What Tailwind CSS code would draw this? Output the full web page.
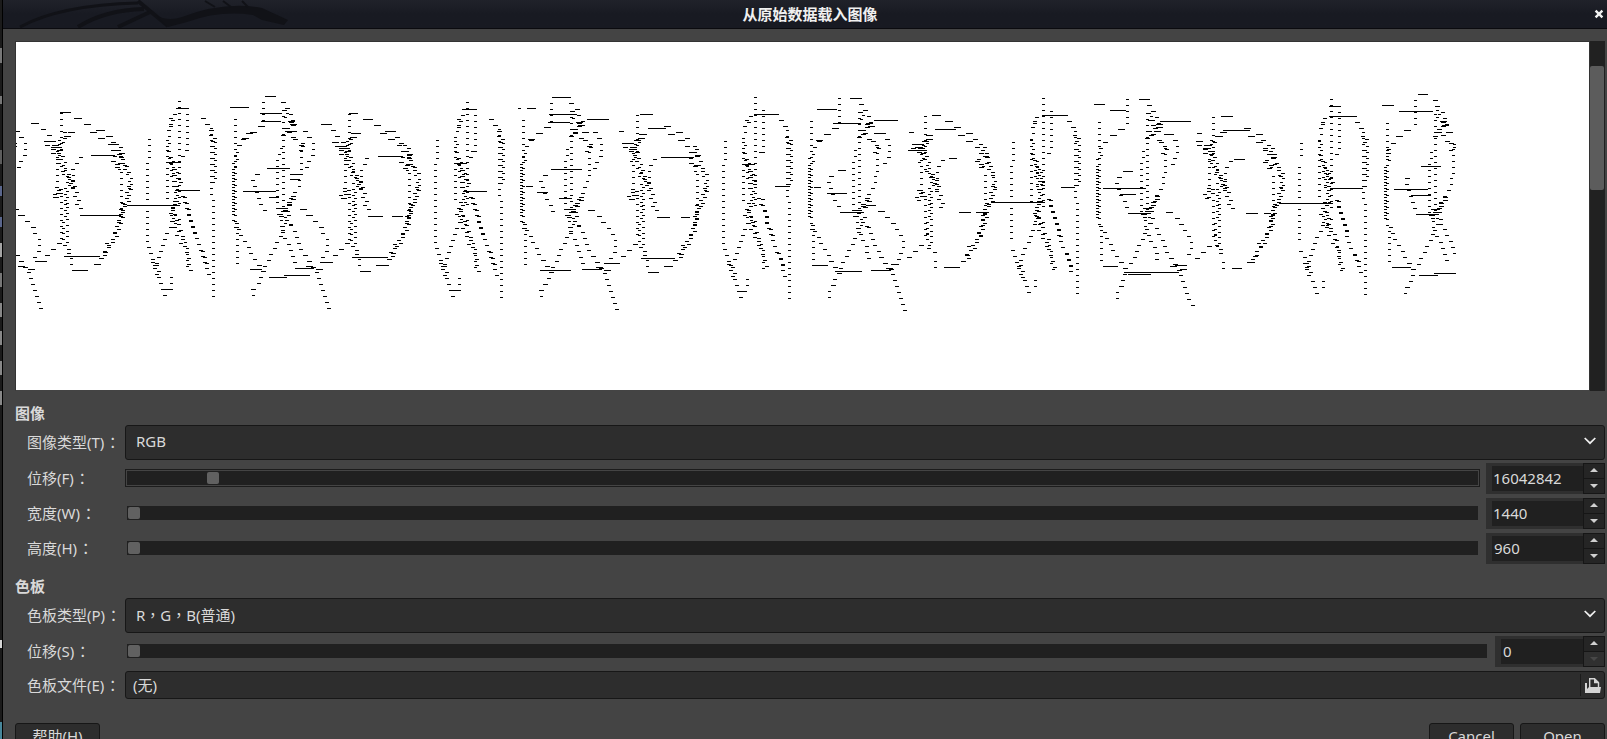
<!DOCTYPE html>
<html lang="zh-CN">
<head>
<meta charset="utf-8">
<title>从原始数据载入图像</title>
<script src="https://cdn.jsdelivr.net/npm/@tailwindcss/browser@4"></script>
</head>
<body class="w-[1607px] h-[739px] overflow-hidden bg-[#444444] text-[#d9d9d9] text-[15px] leading-[20px] font-['Noto_Sans','Noto_Sans_CJK_SC',sans-serif]">
<div class="flex w-full h-full">
  <!-- sliver of the desktop behind the window -->
  <div class="w-[3px] shrink-0 bg-[#1b1b1b] border-r border-black flex flex-col">
    <i class="h-[48px]"></i><i class="h-[15px] bg-[#777]"></i><i class="h-[33px]"></i><i class="h-[8px] bg-[#777]"></i>
    <i class="h-[46px]"></i><i class="h-[14px] bg-[#5c5c5c]"></i><i class="h-[22px]"></i><i class="h-[10px] bg-[#5a668c]"></i>
    <i class="h-[21px]"></i><i class="h-[10px] bg-[#5a668c]"></i><i class="h-[16px]"></i><i class="h-[14px] bg-[#a5a5a5]"></i>
    <i class="h-[16px]"></i><i class="h-[14px] bg-[#777]"></i><i class="h-[16px]"></i><i class="h-[14px] bg-[#888]"></i>
    <i class="h-[14px]"></i><i class="h-[14px] bg-[#888]"></i><i class="h-[16px]"></i><i class="h-[14px] bg-[#888]"></i>
    <i class="h-[16px]"></i><i class="h-[14px] bg-[#888]"></i><i class="h-[235px]"></i>
    <i class="h-[8px] bg-[#d5d5d5]"></i><i class="h-[74px]"></i><i class="grow bg-[#47879b]"></i>
  </div>
  <div class="flex flex-col grow min-w-0">
    <header class="relative h-[29px] shrink-0 bg-linear-to-b from-[#20222a] via-[#181a22] to-[#181a22] border-b border-[#0b0b0f] flex items-center">
      <svg class="absolute left-0 top-0" width="300" height="28" viewBox="3 0 300 28" fill="none" stroke="#111217">
        <path d="M20 27Q60 5 138 3" stroke-width="3"/><path d="M78 27Q105 10 144 9" stroke-width="4"/><path d="M118 27L150 12" stroke-width="4"/>
        <path d="M138 1L168 26" stroke-width="4"/><path d="M155 15Q168 22 182 17Q225 1 262 8L288 20L284 25L262 20L253 15Q220 10 187 22L168 27Z" fill="#111217" stroke="none"/>
        <path d="M215 7L205 1M231 7L223 1M248 7L242 1" stroke-width="2"/>
      </svg>
      <h1 class="relative w-full text-center font-bold text-[15px] text-[#f0f0f0] pl-[10px]">从原始数据载入图像</h1>
      <svg class="absolute right-[3px] top-[9px]" width="10" height="10" viewBox="0 0 10 10"><path d="M1.6 1.6L8.4 8.4M8.4 1.6L1.6 8.4" stroke="#f2f2f2" stroke-width="2.4"/></svg>
    </header>
    <main class="pl-[12px] pr-[2px] pt-[12px] flex flex-col">
      <div class="flex h-[350px] w-[1590px]">
        <div class="w-[1575px] h-full border border-[#333] border-b-[#444] bg-white">
          <svg width="1573" height="348" viewBox="16 42 1573 348" shape-rendering="crispEdges" class="block"><path id="raw" fill="#000"/></svg>
        </div>
        <div class="w-[15px] bg-[#212121] pt-[25px] flex"><div class="w-[14px] h-[124px] rounded-[2px] bg-[#5c5c5c]"></div></div>
      </div>
      <h2 class="font-bold h-[20px] mt-[12px]">图像</h2>
      <div class="flex items-center h-[35px] mt-[2px]">
        <label class="w-[110px] pl-[12px] shrink-0 whitespace-nowrap -mt-px">图像类型(T)<span lang="zh-TW" class="ml-px font-['Noto_Sans_CJK_TC']">：</span></label>
        <div class="grow h-[35px] rounded-[3px] border border-[#171717] bg-[#2d2d2d] flex items-center justify-between pl-[10px] pr-[8px]"><span class="-mt-[4px]">RGB</span>
          <svg width="12" height="8" viewBox="0 0 12 8" class="-mt-[4px]"><path d="M.7 1L6 6.2 11.3 1" fill="none" stroke="#f0f0f0" stroke-width="1.7"/></svg></div>
      </div>
      <div class="flex items-center h-[31px] mt-[3px]">
        <label class="w-[110px] pl-[12px] shrink-0 -mt-px">位移(F)<span lang="zh-TW" class="ml-px font-['Noto_Sans_CJK_TC']">：</span></label>
        <div class="w-[1355px] h-[18px] -mt-px border border-[#1c1c1c] p-px"><div class="h-full bg-[#202020] pl-[80px] flex items-center"><b class="size-[12px] rounded-[2px] bg-[#616161]"></b></div></div>
        <div class="ml-[6px] grow h-[31px] bg-[#2f2f2f] pl-[6px] flex items-center"><div class="grow h-[25px] bg-[#202020] pl-[1px] leading-[24px]">16042842</div>
          <div class="w-[22px] h-full bg-[#252525] border border-[#161616] flex flex-col items-center"><svg width="20" height="29" viewBox="0 0 20 29"><path d="M6 8L10 4L14 8ZM6 20H14L10 24Z" fill="#d0d0d0"/><path d="M0 14.5H20" stroke="#161616"/></svg></div></div>
      </div>
      <div class="flex items-center h-[31px] mt-[4px]">
        <label class="w-[110px] pl-[12px] shrink-0 -mt-px">宽度(W)<span lang="zh-TW" class="ml-px font-['Noto_Sans_CJK_TC']">：</span></label>
        <div class="w-[1355px] h-[18px] -mt-px p-[2px]"><div class="h-full bg-[#202020] pl-[1px] flex items-center"><b class="size-[12px] rounded-[2px] bg-[#616161]"></b></div></div>
        <div class="ml-[6px] grow h-[31px] bg-[#2f2f2f] pl-[6px] flex items-center"><div class="grow h-[25px] bg-[#202020] pl-[1px] leading-[24px]">1440</div>
          <div class="w-[22px] h-full bg-[#252525] border border-[#161616] flex flex-col items-center"><svg width="20" height="29" viewBox="0 0 20 29"><path d="M6 8L10 4L14 8ZM6 20H14L10 24Z" fill="#d0d0d0"/><path d="M0 14.5H20" stroke="#161616"/></svg></div></div>
      </div>
      <div class="flex items-center h-[31px] mt-[4px]">
        <label class="w-[110px] pl-[12px] shrink-0 -mt-px">高度(H)<span lang="zh-TW" class="ml-px font-['Noto_Sans_CJK_TC']">：</span></label>
        <div class="w-[1355px] h-[18px] -mt-px p-[2px]"><div class="h-full bg-[#202020] pl-[1px] flex items-center"><b class="size-[12px] rounded-[2px] bg-[#616161]"></b></div></div>
        <div class="ml-[6px] grow h-[31px] bg-[#2f2f2f] pl-[6px] flex items-center"><div class="grow h-[25px] bg-[#202020] pl-[2px] leading-[24px]">960</div>
          <div class="w-[22px] h-full bg-[#252525] border border-[#161616] flex flex-col items-center"><svg width="20" height="29" viewBox="0 0 20 29"><path d="M6 8L10 4L14 8ZM6 20H14L10 24Z" fill="#d0d0d0"/><path d="M0 14.5H20" stroke="#161616"/></svg></div></div>
      </div>
      <h2 class="font-bold h-[20px] mt-[12px]">色板</h2>
      <div class="flex items-center h-[35px] mt-[2px]">
        <label class="w-[110px] pl-[12px] shrink-0 whitespace-nowrap -mt-px">色板类型(P)<span lang="zh-TW" class="ml-px font-['Noto_Sans_CJK_TC']">：</span></label>
        <div class="grow h-[35px] rounded-[3px] border border-[#171717] bg-[#2d2d2d] flex items-center justify-between pl-[10px] pr-[8px]"><span class="-mt-[2px]">R<span lang="zh-TW" class="font-['Noto_Sans_CJK_TC']">，</span>G<span lang="zh-TW" class="font-['Noto_Sans_CJK_TC']">，</span>B(普通)</span>
          <svg width="12" height="8" viewBox="0 0 12 8" class="-mt-[4px]"><path d="M.7 1L6 6.2 11.3 1" fill="none" stroke="#f0f0f0" stroke-width="1.7"/></svg></div>
      </div>
      <div class="flex items-center h-[31px] mt-[3px]">
        <label class="w-[110px] pl-[12px] shrink-0 -mt-px">位移(S)<span lang="zh-TW" class="ml-px font-['Noto_Sans_CJK_TC']">：</span></label>
        <div class="w-[1364px] h-[18px] -mt-px p-[2px]"><div class="h-full bg-[#202020] pl-[1px] flex items-center"><b class="size-[12px] rounded-[2px] bg-[#616161]"></b></div></div>
        <div class="ml-[6px] grow h-[31px] bg-[#2f2f2f] pl-[6px] flex items-center"><div class="grow h-[25px] bg-[#202020] pl-[2px] leading-[24px]">0</div>
          <div class="w-[22px] h-full bg-[#252525] border border-[#161616] flex flex-col items-center"><svg width="20" height="29" viewBox="0 0 20 29"><path d="M0 15H20V29H0Z" fill="#303030"/><path d="M6 8L10 4L14 8Z" fill="#d0d0d0"/><path d="M6 20H14L10 24Z" fill="#474747"/><path d="M0 14.5H20" stroke="#161616"/></svg></div></div>
      </div>
      <div class="flex items-center h-[28px] mt-[4px]">
        <label class="w-[110px] pl-[12px] shrink-0 whitespace-nowrap -mt-px">色板文件(E)<span lang="zh-TW" class="ml-px font-['Noto_Sans_CJK_TC']">：</span></label>
        <div class="grow h-[28px] rounded-[3px] border border-[#171717] bg-[#2d2d2d] flex items-center pl-[7px] pr-[3px]"><span class="grow -mt-px">(无)</span>
          <i class="w-px h-[22px] bg-[#1b1b1b] mr-[4px]"></i>
          <svg width="16" height="17" viewBox="0 0 16 17"><path d="M4.7 10V1.7H9.5L13.5 5.5V10" fill="none" stroke="#d4d4d4" stroke-width="1.4"/><path d="M9 1L14.3 6.2H9Z" fill="#d4d4d4"/><path d="M0 6H2V12L4 10H16L15 16H0Z" fill="#d4d4d4"/></svg></div>
      </div>
      <footer class="flex h-[34px] mt-[24px]">
        <button class="w-[85px] h-[34px] rounded-[3px] border border-[#171717] bg-[#2d2d2d] pb-[7px] leading-[25px]">帮助(H)</button>
        <button class="ml-auto w-[85px] h-[34px] rounded-[3px] border border-[#171717] bg-[#2d2d2d] pb-[7px] leading-[25px]">Cancel</button>
        <button class="ml-[6px] w-[85px] h-[34px] rounded-[3px] border border-[#171717] bg-[#2d2d2d] pb-[7px] leading-[25px]">Open</button>
      </footer>
    </main>
  </div>
</div>
<script>
// Raw pixel data seen as scanlines. Coordinates are thirds of a pixel in a tile 864 wide.
// Each stroke: [vertical step, x, y, x, y, ...]
const strokes = [
[18,185,101,185,220],[18,173,232,173,345],[18,185,350,185,475],[6,184,180,184,192],
[9,178,203,190,247,194,270,205,290],[9,207,290,200,325,200,372],[9,198,372,196,460],[9,196,460,197,495],[12,197,495,210,520],[18,215,534,217,568],
[18,197,158,190,190],[12,215,157,190,175],[9,162,202,180,218],[18,242,232,222,268,217,300,222,322],[9,212,292,222,326],[12,222,326,240,388],
[18,262,133,302,151,328,169,340,187],[18,280,157,305,175,332,193,350,220,345,244],[9,358,193,366,229],[11,345,211,366,232],[9,345,245,356,262],
[18,364,220,378,256],[9,374,250,389,284],[10,388,284,393,325],[9,393,320,379,375],[18,356,250,358,270],[18,362,277,364,385],[9,372,370,362,405],[9,366,402,350,460],
[9,350,460,330,500],[12,325,490,310,535],[18,318,517,292,553],[18,368,391,355,440],
[18,132,148,150,166],[12,145,184,168,202],[12,148,196,165,220],[18,160,184,178,202],[12,178,215,172,250],[11,188,260,192,285],[10,176,322,160,358],[12,188,327,177,352],
[18,449,178,449,236],[18,443,250,443,487],[18,446,502,466,556],[9,465,548,475,590],[18,478,592,497,648],[18,515,592,513,628],
[18,538,64,538,380],[18,562,85,562,212],[18,560,211,550,229],[18,525,103,513,139],[18,516,114,508,150,503,180],[9,503,180,503,205],[18,507,214,518,262,518,320],
[18,503,211,503,360],[9,514,235,520,290],[9,530,268,528,310],[12,543,295,530,330],[9,526,318,530,370],[9,528,365,514,405],[18,521,385,533,430],[9,516,405,521,430],
[18,520,423,502,460,490,495,478,530,468,556],[12,530,405,533,430],[12,527,443,553,500],[18,536,433,556,485,564,525,565,566],[18,556,500,574,572],
[18,550,350,568,400,585,455,592,485,617,545,627,586],[18,558,352,575,425,590,466],
[18,610,115,634,150],[18,634,145,634,355],[9,638,165,642,184],[18,646,187,646,300],[18,640,198,640,315],[18,640,361,640,652],[18,607,514,624,556],
[18,706,118,706,445],[18,731,178,720,196,712,210],[10,710,208,706,240],[18,700,249,700,404],[18,703,258,700,420],[18,713,442,713,552],
[18,710,430,725,465,745,502,763,538,790,575],[18,790,67,790,132],[18,784,139,731,178],
[18,850,92,850,390],[18,850,450,832,487,815,523,797,559],[18,790,575,775,612,760,632,760,652],
[18,841,205,835,235],[18,832,240,832,392],[18,773,283,760,300,765,320,778,355,795,391],
[18,850,67,870,94,890,136],[11,858,90,862,118,890,140],[10,880,126,865,150,852,170],[18,862,154,888,184],[9,885,155,908,160],
[18,888,178,904,200,904,280],[18,918,155,941,190,941,226,922,262],[10,912,190,904,215],[18,902,283,895,320,867,372,845,408],[9,884,350,855,395],
[9,850,385,840,410],[9,849,403,849,440],[18,848,440,855,470,870,495,885,547],
[14,858,392,870,435],[18,875,435,895,480,910,520,943,566],[18,950,577,975,650,990,686],
[18,907,388,930,406,961,442,980,475,982,512,970,535],[18,1044,490,1020,515,1000,532],[9,930,560,952,568]
];
// Long runs for each repetition: x1, x2, y
const runs = [
[180,212,97,222,246,115,690,746,82,796,830,49,780,846,100,783,843,124,273,344,226,500,542,247,528,566,85,530,599,331,382,540,376,240,356,406,193,302,529,217,265,571,282,302,553,105,140,544,93,117,130,482,518,628,800,869,265,730,830,334,807,836,352,807,860,592,852,930,586,885,942,565,750,785,568,870,900,283,870,900,298,288,316,151,738,758,160],
[184,212,100,224,254,118,270,346,229,522,566,88,498,538,250,530,596,334,240,284,409,312,344,409,192,300,532,216,248,574,264,302,556,98,130,133,690,698,85,718,746,85,792,848,52,784,860,103,780,846,127,788,880,268,756,850,571,882,935,568,96,135,547,486,512,631,748,780,338,812,850,355,714,736,319,292,326,154],
[32,98,118,192,230,103,216,270,145,255,355,232,534,608,103,498,536,253,596,642,319,244,284,412,315,343,412,196,297,535,265,291,559,216,248,577,722,782,88,822,848,55,770,854,130,752,812,340,714,735,322,793,866,397,710,755,556,776,856,574,20,76,568,84,132,550,488,512,634,785,810,271,870,900,376],
[30,102,121,212,274,148,204,232,106,242,266,124,254,278,235,534,612,106,592,634,322,380,542,367,284,320,397,336,370,397,240,288,562,690,722,73,738,786,91,824,855,58,716,846,325,768,816,343,792,860,400,716,760,559,780,944,577,792,860,583,20,80,571,132,180,211,80,105,553,776,806,274],
[24,116,124,212,292,151,206,242,109,245,278,238,530,614,109,530,566,79,534,632,325,380,542,370,283,320,400,336,358,400,240,270,565,284,308,547,690,726,76,740,842,94,799,830,43,806,866,259,727,830,328,776,836,346,792,860,403,720,776,562,802,860,586,846,912,580,-40,78,577,68,105,556],
[]];
let d = "";
function run(x, y, w) {
  let a = Math.max(16, Math.round(x)), b = Math.min(1456, Math.round(x) + w);
  if (b > a) d += `M${a} ${Math.round(y)}h${b - a}v1h${a - b}z`;
}
for (let k = -1; k < 6; k++) {
  const shift = Math.max(k, 0) * 3, ox = k * 288;
  for (const s of strokes) {
    const step = s[0], last = s[s.length - 1];
    let wrap = shift % step, n = 0;
    if (step === 18 && k > 1 && s[2] < 70) wrap -= 18;
    for (let y = s[2] + wrap; y <= last + 1 + Math.min(shift, 4); y += step) {
      let i = 1;
      while (i < s.length - 4 && y > s[i + 3]) i += 2;
      const t = Math.max(0, Math.min(1, (y - s[i + 1]) / (s[i + 3] - s[i + 1])));
      let x = s[i] + t * (s[i + 2] - s[i]);
      // dense strokes weave between neighbouring columns
      if (step < 18) x += n++ % 2 ? 4 : -4;
      x = 6 * Math.round((x - 4) / 6) + 4;
      const slope = Math.abs((s[i + 2] - s[i]) / (s[i + 3] - s[i + 1]));
      const w = slope > 1.2 ? 7 : slope > .6 ? 5 : slope > .2 ? 4 : 3;
      run(ox + x / 3 - w / 2, 80 + (y - 1) / 3, w);
    }
  }
  const r = runs[k] || [];
  for (let i = 0; i < r.length; i += 3) run(ox + r[i] / 3, 80 + (r[i + 2] - 1) / 3, Math.round((r[i + 1] - r[i]) / 3));
}
document.getElementById("raw").setAttribute("d", d);
</script>
</body>
</html>
